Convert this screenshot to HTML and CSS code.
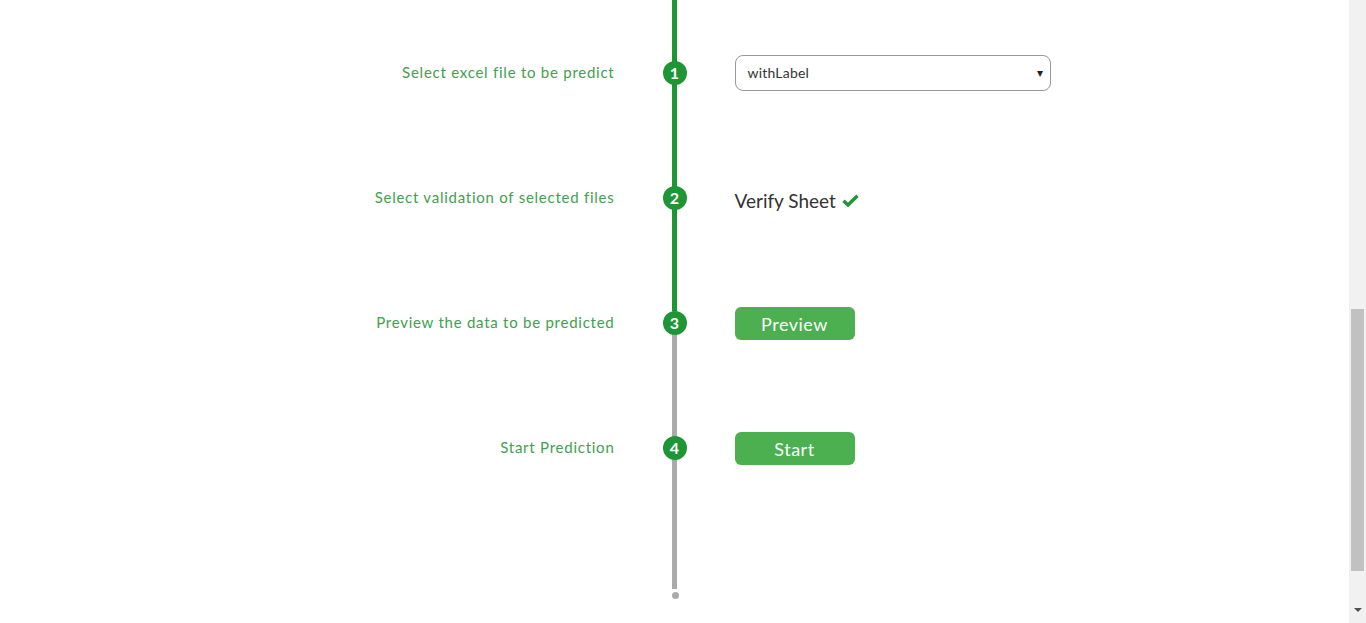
FILE: index.html
```html
<!DOCTYPE html>
<html lang="en">
<head>
<meta charset="utf-8">
<title>Prediction steps</title>
<link rel="stylesheet" href="styles.css">
</head>
<body>
<main class="page">
  <section class="timeline">
    <div class="step">
      <div class="label">Select excel file to be predict</div>
      <div class="node"><span class="num">1</span></div>
      <div class="content">
        <div class="select">
          <span class="select-text">withLabel</span>
          <span class="caret">▾</span>
        </div>
      </div>
    </div>
    <div class="step">
      <div class="label">Select validation of selected files</div>
      <div class="node"><span class="num">2</span></div>
      <div class="content">
        <div class="verify">Verify Sheet
          <svg class="check" width="17" height="13" viewBox="0 0 17 13"><path d="M1.5 6.8 L6 11 L15.5 1.8" fill="none" stroke="#1e9636" stroke-width="3.4" stroke-linejoin="miter"/></svg>
        </div>
      </div>
    </div>
    <div class="step">
      <div class="label">Preview the data to be predicted</div>
      <div class="node"><span class="num">3</span></div>
      <div class="content"><button class="btn">Preview</button></div>
    </div>
    <div class="step">
      <div class="label">Start Prediction</div>
      <div class="node"><span class="num">4</span></div>
      <div class="content"><button class="btn">Start</button></div>
    </div>
    <div class="tail"><span class="dot"></span></div>
  </section>
</main>
<aside class="scrollbar">
  <div class="thumb"></div>
  <div class="arrow-down"></div>
</aside>
</body>
</html>
```
FILE: styles.css
```css
html, body {
  margin: 0;
  padding: 0;
  height: 100%;
  overflow: hidden;
  background: #fff;
}
body {
  display: flex;
  font-family: "Lato", "Open Sans", sans-serif;
}
.page {
  width: 1349px;
  flex: none;
}
.timeline {
  padding-top: 10px;
  background:
    linear-gradient(to bottom, #1e9636 0, #1e9636 311px, #aaaaaa 311px, #aaaaaa 589px, transparent 589px)
    center top / 5px 589px no-repeat;
}
.step {
  display: grid;
  grid-template-columns: 1fr 24px 1fr;
  column-gap: 48px;
  height: 125px;
  align-items: center;
}
.label {
  text-align: right;
  color: #42a04e;
  font-size: 15px;
  letter-spacing: 0.75px;
  margin-top: -1px;
}
.node {
  display: flex;
  justify-content: center;
}
.num {
  width: 24px;
  height: 24px;
  border-radius: 50%;
  background: #1e9636;
  color: #fff;
  font-weight: 700;
  font-size: 16px;
  display: flex;
  align-items: center;
  justify-content: center;
}
.content {
  display: flex;
  align-items: center;
}
.select {
  height: 34px;
  border: 1px solid #999;
  border-radius: 8px;
  display: flex;
  align-items: center;
  justify-content: space-between;
  padding: 0 6px 0 12px;
  box-sizing: content-box;
  width: 296px;
  color: #333;
  font-size: 14px;
  letter-spacing: 0.2px;
}
.caret {
  font-size: 12px;
  color: #222;
}
.verify {
  display: flex;
  align-items: center;
  gap: 6px;
  color: #333;
  font-size: 19px;
  margin-top: 5px;
}
.btn {
  width: 120px;
  height: 33px;
  border: none;
  border-radius: 6px;
  background: #4caf50;
  color: #fff;
  font-family: inherit;
  font-size: 18px;
  letter-spacing: 0.5px;
  padding: 0;
  margin-top: 2px;
}
.tail {
  height: 89px;
  display: flex;
  justify-content: center;
  align-items: flex-end;
}
.dot {
  width: 7px;
  height: 7px;
  border-radius: 50%;
  background: #aaaaaa;
  margin-left: 1px;
}
.scrollbar {
  width: 17px;
  flex: none;
  height: 100vh;
  background: #f1f1f1;
  display: flex;
  flex-direction: column;
  align-items: center;
}
.thumb {
  width: 13px;
  height: 262px;
  margin-top: 309px;
  background: #c1c1c1;
}
.arrow-down {
  margin-top: 37px;
  width: 0;
  height: 0;
  border-left: 4px solid transparent;
  border-right: 4px solid transparent;
  border-top: 4px solid #505050;
}
```
